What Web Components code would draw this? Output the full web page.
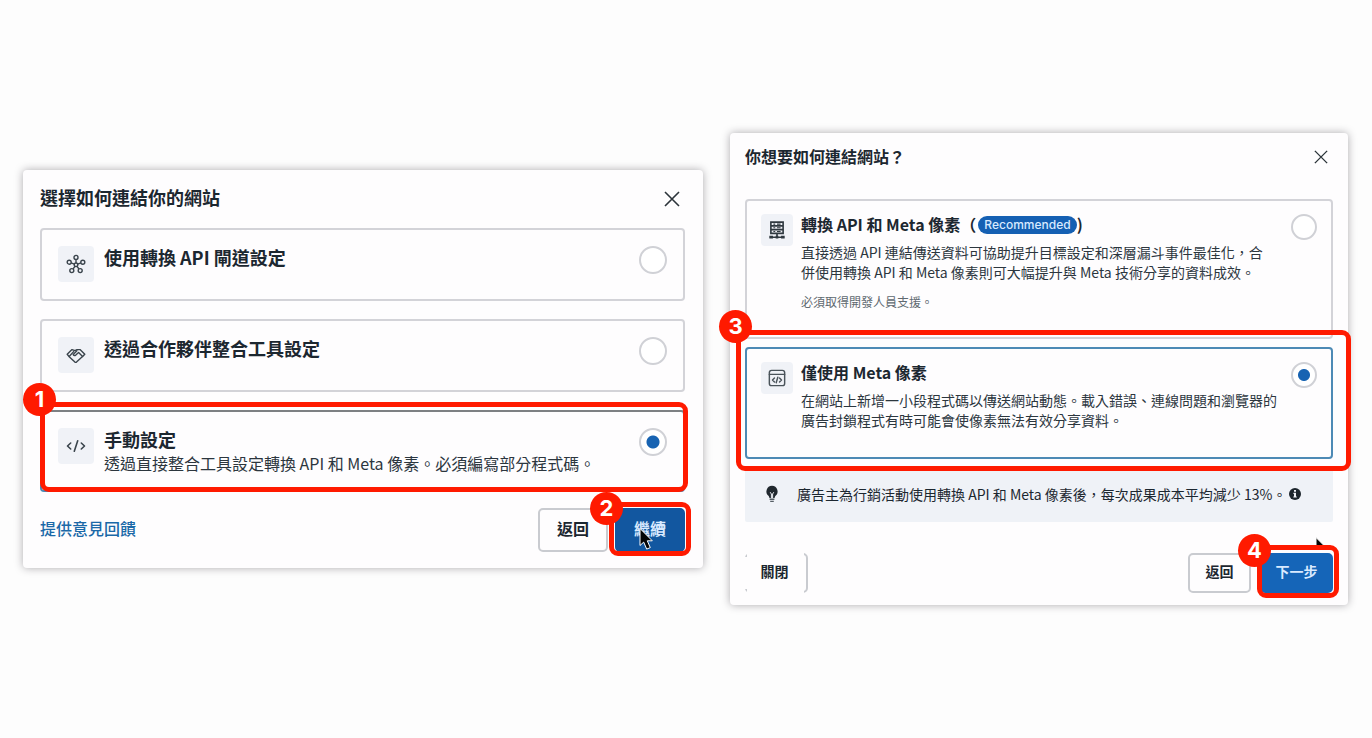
<!DOCTYPE html>
<html lang="zh-Hant">
<head>
<meta charset="utf-8">
<meta name="viewport" content="width=device-width, initial-scale=1">
<title>連結網站</title>
<style>
  body {
    margin: 0;
    min-height: 100vh;
    box-sizing: border-box;
    padding: 24px 24px 24px 23px;
    display: grid;
    grid-template-columns: minmax(0, 680fr) minmax(0, 618fr);
    column-gap: 27px;
    align-items: center;
    background: #fdfdfd;
    color: #1c2730;
    font-family: "Noto Sans CJK TC", sans-serif;
  }
</style>
</head>
<body>
  <connect-dialog heading="選擇如何連結你的網站" class="large">
    <choice-card name="setup" icon="hub" heading="使用轉換 API 閘道設定"></choice-card>
    <choice-card name="setup" icon="handshake" heading="透過合作夥伴整合工具設定"></choice-card>
    <step-callout number="1" class="inner">
      <choice-card name="setup" icon="code" heading="手動設定" checked class="tall muted">透過直接整合工具設定轉換 API 和 Meta 像素。必須編寫部分程式碼。</choice-card>
    </step-callout>
    <feedback-link slot="start">提供意見回饋</feedback-link>
    <action-button slot="end">返回</action-button>
    <step-callout slot="end" number="2" class="action">
      <action-button class="primary pressed">繼續</action-button>
      <mouse-pointer slot="pointer"></mouse-pointer>
    </step-callout>
  </connect-dialog>

  <connect-dialog heading="你想要如何連結網站？" class="small">
    <choice-card name="method" icon="server" heading="轉換 API 和 Meta 像素" badge="Recommended" class="roomy">直接透過 API 連結傳送資料可協助提升目標設定和深層漏斗事件最佳化，合併使用轉換 API 和 Meta 像素則可大幅提升與 Meta 技術分享的資料成效。<span slot="note">必須取得開發人員支援。</span></choice-card>
    <step-callout number="3" class="outer">
      <choice-card name="method" icon="window" heading="僅使用 Meta 像素" checked class="medium">在網站上新增一小段程式碼以傳送網站動態。載入錯誤、連線問題和瀏覽器的廣告封鎖程式有時可能會使像素無法有效分享資料。</choice-card>
    </step-callout>
    <tip-banner>廣告主為行銷活動使用轉換 API 和 Meta 像素後，每次成果成本平均減少 13%。</tip-banner>
    <action-button slot="start" class="faded">關閉</action-button>
    <action-button slot="end">返回</action-button>
    <step-callout slot="end" number="4" class="action above">
      <action-button class="primary">下一步</action-button>
      <mouse-pointer slot="pointer"></mouse-pointer>
    </step-callout>
  </connect-dialog>

<script>
const ICONS = {
  hub: `<g fill="none" stroke="#3a444c" stroke-width="1.4"><circle cx="10" cy="10.8" r="1.8"/><circle cx="10" cy="3.4" r="2"/><circle cx="3.2" cy="8.2" r="2"/><circle cx="16.8" cy="8.2" r="2"/><circle cx="5.8" cy="16.6" r="2"/><circle cx="14.2" cy="16.6" r="2"/><path d="M10 5.4V9M5.1 8.9l3.2 1.2M14.9 8.9l-3.2 1.2M7 15l2-2.7M13 15l-2-2.7"/></g>`,
  handshake: `<g fill="none" stroke="#3a444c" stroke-width="1.4" stroke-linejoin="round" stroke-linecap="round"><path d="M1.2 9.2 6 4.6l3 1.1 2-1.1h3l4.8 4.6-2 2.1-6.3 5.8q-.8.6-1.6 0l-6-5.7z"/><path d="M3.4 11.2 7.6 6.6M16.6 11.4l-4-3.9-2.8 2.6q-1.7 1-2.6-.5l3.7-3.8"/></g>`,
  code: `<g fill="none" stroke="#3a444c" stroke-width="1.6" stroke-linecap="round" stroke-linejoin="round"><path d="M4.7 7 1.5 10l3.2 3M15.3 7l3.2 3-3.2 3M11.7 4.7 8.3 15.3"/></g>`,
  server: `<g fill="none" stroke="#303940" stroke-width="1.8"><path d="M3.2 1.2h13.6v12.6H3.2zM3.2 5.4h13.6M3.2 9.6h13.6M10 13.8v3M2 18h16"/><path stroke-width="1.3" d="M6 3.4h2M10 3.4h4M6 7.5h2M10 7.5h4M6 11.7h2M10 11.7h4"/></g><path fill="#303940" d="M1.5 16.5h4v3h-4zM8.5 16.5h3v3h-3zM14.5 16.5h4v3h-4z"/>`,
  window: `<g fill="none" stroke="#4a535a" stroke-width="1.6" stroke-linecap="round" stroke-linejoin="round"><rect x="1.5" y="1.5" width="17" height="17" rx="2.5"/><path d="M1.5 6h17M7.2 10 5 12.2l2.2 2.2M12.8 10l2.2 2.2-2.2 2.2M10.9 9.2l-1.8 6"/></g>`
};

function define(name, html, setup) {
  const template = document.createElement('template');
  template.innerHTML = html;
  customElements.define(name, class extends HTMLElement {
    connectedCallback() {
      if (this.shadowRoot) return;
      const root = this.attachShadow({ mode: 'open' });
      root.append(template.content.cloneNode(true));
      if (setup) setup(this, root);
    }
  });
}

define('connect-dialog', `
<style>
  :host { display: block; box-sizing: border-box; background: #fefdfe; border-radius: 4px; box-shadow: 0 0 8px rgba(30, 25, 35, .36); }
  :host(.large) { --title: 18px; --title-line: 22px; --text: 16px; --text-line: 22px; --tile: 36px; --glyph: 20px; --radio: 28px; --dot: 14px; --indent: 16px; --gap: 10px; --card: 73px; --btn: 44px; --btn-w: 70px; padding: 16px 18px 16px 17px; }
  :host(.small) { --title: 16px; --title-line: 20px; --text: 14px; --text-line: 20px; --tile: 32px; --glyph: 18px; --radio: 26px; --dot: 13px; --indent: 14px; --gap: 8px; --card: 112px; --btn: 40px; --btn-w: 63px; padding: 12px 15px; }
  header { display: flex; align-items: flex-start; justify-content: space-between; height: 26px; margin-bottom: 16px; }
  :host(.small) header { margin-bottom: 28px; }
  h2 { margin: 0; font-size: var(--title); line-height: 22px; font-weight: 700; }
  .close { appearance: none; border: 0; background: none; padding: 0; width: 26px; height: 26px; display: grid; place-items: center; color: #2c343a; }
  :host(.small) .close { width: 24px; height: 24px; }
  .close svg { width: 16px; height: 16px; }
  :host(.small) .close svg { width: 14px; height: 14px; }
  .body { display: flex; flex-direction: column; gap: 18px; }
  :host(.small) .body { gap: 8px; }
  footer { display: flex; justify-content: space-between; align-items: center; margin-top: 16px; }
  :host(.small) footer { margin-top: 31px; }
  .end { display: flex; gap: 7px; }
  :host(.small) .end { gap: 9px; }
</style>
<section>
  <header><h2></h2><button class="close" aria-label="關閉視窗"><svg viewBox="0 0 16 16" fill="none" stroke="currentColor" stroke-width="1.6"><path d="M1 1l14 14M15 1L1 15"/></svg></button></header>
  <div class="body"><slot></slot></div>
  <footer><slot name="start"></slot><div class="end"><slot name="end"></slot></div></footer>
</section>`, (host, root) => {
  root.querySelector('h2').textContent = host.getAttribute('heading');
});

define('choice-card', `
<style>
  :host { display: block; }
  label { box-sizing: border-box; min-height: var(--card); display: flex; align-items: flex-start; gap: var(--gap); padding: 16px var(--indent); border: 2px solid #d3d3d8; border-radius: 4px; }
  :host(.tall) label { min-height: 82px; }
  :host(.tall) .copy { display: flex; flex-direction: column; gap: 2px; }
  :host(.roomy) label { min-height: 140px; }
  :host(.roomy) label, :host(.medium) label { padding-top: 13px; }
  :host([checked]) label { border-color: #4d8ab5; }
  :host(.muted) label { border-top-color: #7d8083; }
  .tile { flex: none; display: grid; place-items: center; width: var(--tile); height: var(--tile); background: #f0f2f7; border-radius: 4px; }
  .tile svg { width: var(--glyph); height: var(--glyph); }
  .copy { flex: 1; min-width: 0; }
  .head { display: flex; align-items: center; height: var(--title-line); font-size: var(--title); line-height: var(--title-line); font-weight: 700; white-space: nowrap; }
  .badge { padding: 0 6px; margin: 2px 0 0 2px; border-radius: 9px; background: #1560b3; color: #d8eaff; font: 500 12px/18px Inter, sans-serif; }
  .text { font-size: var(--text); line-height: var(--text-line); color: #2c363e; }
  :host(.roomy) .text, :host(.medium) .text { margin-top: 8px; }
  :host(.roomy) .text { max-width: 468px; }
  .note { font-size: 12px; line-height: 18px; margin-top: 11px; color: #5f6970; }
  input { appearance: none; flex: none; box-sizing: border-box; margin: 0; width: var(--radio); height: var(--radio); border: 2px solid #d0d1d6; border-radius: 50%; background: #fff; }
  input:checked { background: radial-gradient(circle, #1763b2 0 calc(var(--dot) / 2 - 1px), #fff calc(var(--dot) / 2)); }
</style>
<label>
  <span class="tile"></span>
  <span class="copy">
    <div class="head"><span class="title"></span></div>
    <div class="text"><slot></slot></div>
    <div class="note"><slot name="note"></slot></div>
  </span>
  <input type="radio">
</label>`, (host, root) => {
  root.querySelector('.tile').innerHTML = `<svg viewBox="0 0 20 20" aria-hidden="true">${ICONS[host.getAttribute('icon')]}</svg>`;
  root.querySelector('.title').textContent = host.getAttribute('heading');
  const badge = host.getAttribute('badge');
  if (badge) {
    root.querySelector('.head').insertAdjacentHTML('beforeend', `<span>（</span><span class="badge">${badge}</span><span>)</span>`);
  }
  const input = root.querySelector('input');
  input.name = host.getAttribute('name');
  input.checked = host.hasAttribute('checked');
  if (!host.querySelector('[slot=note]')) root.querySelector('.note').remove();
});

define('tip-banner', `
<style>
  :host { display: flex; align-items: center; box-sizing: border-box; min-height: 55px; padding: 0 24px 2px 18px; background: #eff2f7; font-size: 14px; line-height: 20px; border-radius: 2px; }
  .bulb { flex: none; width: 18px; height: 18px; margin-right: 16px; }
  .info { flex: none; width: 12px; height: 12px; margin-left: 3px; }
</style>
<svg class="bulb" viewBox="0 0 18 18" aria-hidden="true"><path fill="#20282e" d="M9 .8a5.6 5.6 0 0 0-3.3 10.1l.8 2.1h5l.8-2.1A5.6 5.6 0 0 0 9 .8z"/><path fill="none" stroke="#eff2f7" d="M7.2 7.2 8.4 9v4M10.8 7.2 9.6 9v4"/><path fill="none" stroke="#555e65" stroke-width="1.4" d="M6.6 14.2h4.8M7.2 16.4h3.6"/></svg>
<span><slot></slot></span>
<svg class="info" viewBox="0 0 12 12" role="img" aria-label="資訊"><circle cx="6" cy="6" r="6" fill="#1c252c"/><path fill="#eff2f7" d="M5 2h2v1.8H5zM4.4 4.8H7v3.6h.8v1.2H4.3V8.4H5V6h-.6z"/></svg>`);

define('action-button', `
<style>
  :host { display: block; }
  button { appearance: none; box-sizing: border-box; display: block; position: relative; isolation: isolate; margin: 0; padding: 0 8px 4px; min-width: var(--btn-w); height: var(--btn); border: 2px solid #c9cbd0; border-radius: 5px; background: #fefdfe; color: #1c2730; font: 700 var(--text)/20px "Noto Sans CJK TC", sans-serif; }
  :host(.primary) button { border-color: #1565b8; background: #1565b8; color: #d9eaff; }
  :host(.pressed) button { border-color: #1257a0; background: #1257a0; }
  :host(.primary:not(.pressed)) button { min-width: 73px; }
  :host(.faded) button { padding-right: 12px; }
  :host(.faded) button::before, :host(.faded) button::after { content: ""; position: absolute; z-index: -1; background: #fefdfe; }
  :host(.faded) button::before { inset: -2px 2px -2px 0; }
  :host(.faded) button::after { inset: 2px 8px 2px -2px; }
</style>
<button type="button"><slot></slot></button>`);

define('feedback-link', `
<style>
  :host { display: block; padding-bottom: 4px; }
  a { color: #1b69a8; text-decoration: none; font-size: var(--text); line-height: 22px; font-weight: 500; }
</style>
<a href="#feedback"><slot></slot></a>`);

define('mouse-pointer', `
<style>
  :host { display: block; width: 16px; height: 24px; }
  svg { display: block; width: 16px; height: 24px; }
</style>
<svg viewBox="0 0 16 24" aria-hidden="true"><path fill="#050505" stroke="#fff" stroke-width="1" d="M2 1.5v17l3.7-3.4 3 7 3.6-1.5-3-6.8h5z"/></svg>`);

define('step-callout', `
<style>
  :host { display: block; position: relative; --frame: -8px -3px 0 0; --x: -17px; --y: -27px; }
  :host(.outer) { --frame: -17px -18px -12px -9px; --x: -26px; --y: -37px; }
  :host(.action) { --frame: -6px -6px -4px; --x: -25px; --y: -16px; }
  :host(.above) { --frame: -8px -6px -5px -3px; --x: -22px; --y: -19px; }
  .frame { position: absolute; inset: var(--frame); border: 5px solid #ff1a00; border-radius: 9px; pointer-events: none; z-index: 2; }
  .number { position: absolute; left: var(--x); top: var(--y); z-index: 3; width: 33px; height: 33px; border-radius: 50%; background: #ff1a00; color: #fff; font: 700 22px/33px Inter, sans-serif; text-align: center; }
  .pointer { position: absolute; left: 23px; top: 19px; z-index: 1; }
  :host(.above) .pointer { left: 54px; top: -17px; height: 14px; overflow: hidden; }
</style>
<slot></slot>
<div class="pointer"><slot name="pointer"></slot></div>
<div class="frame"></div>
<div class="number"></div>`, (host, root) => {
  root.querySelector('.number').textContent = host.getAttribute('number');
});
</script>
</body>
</html>
